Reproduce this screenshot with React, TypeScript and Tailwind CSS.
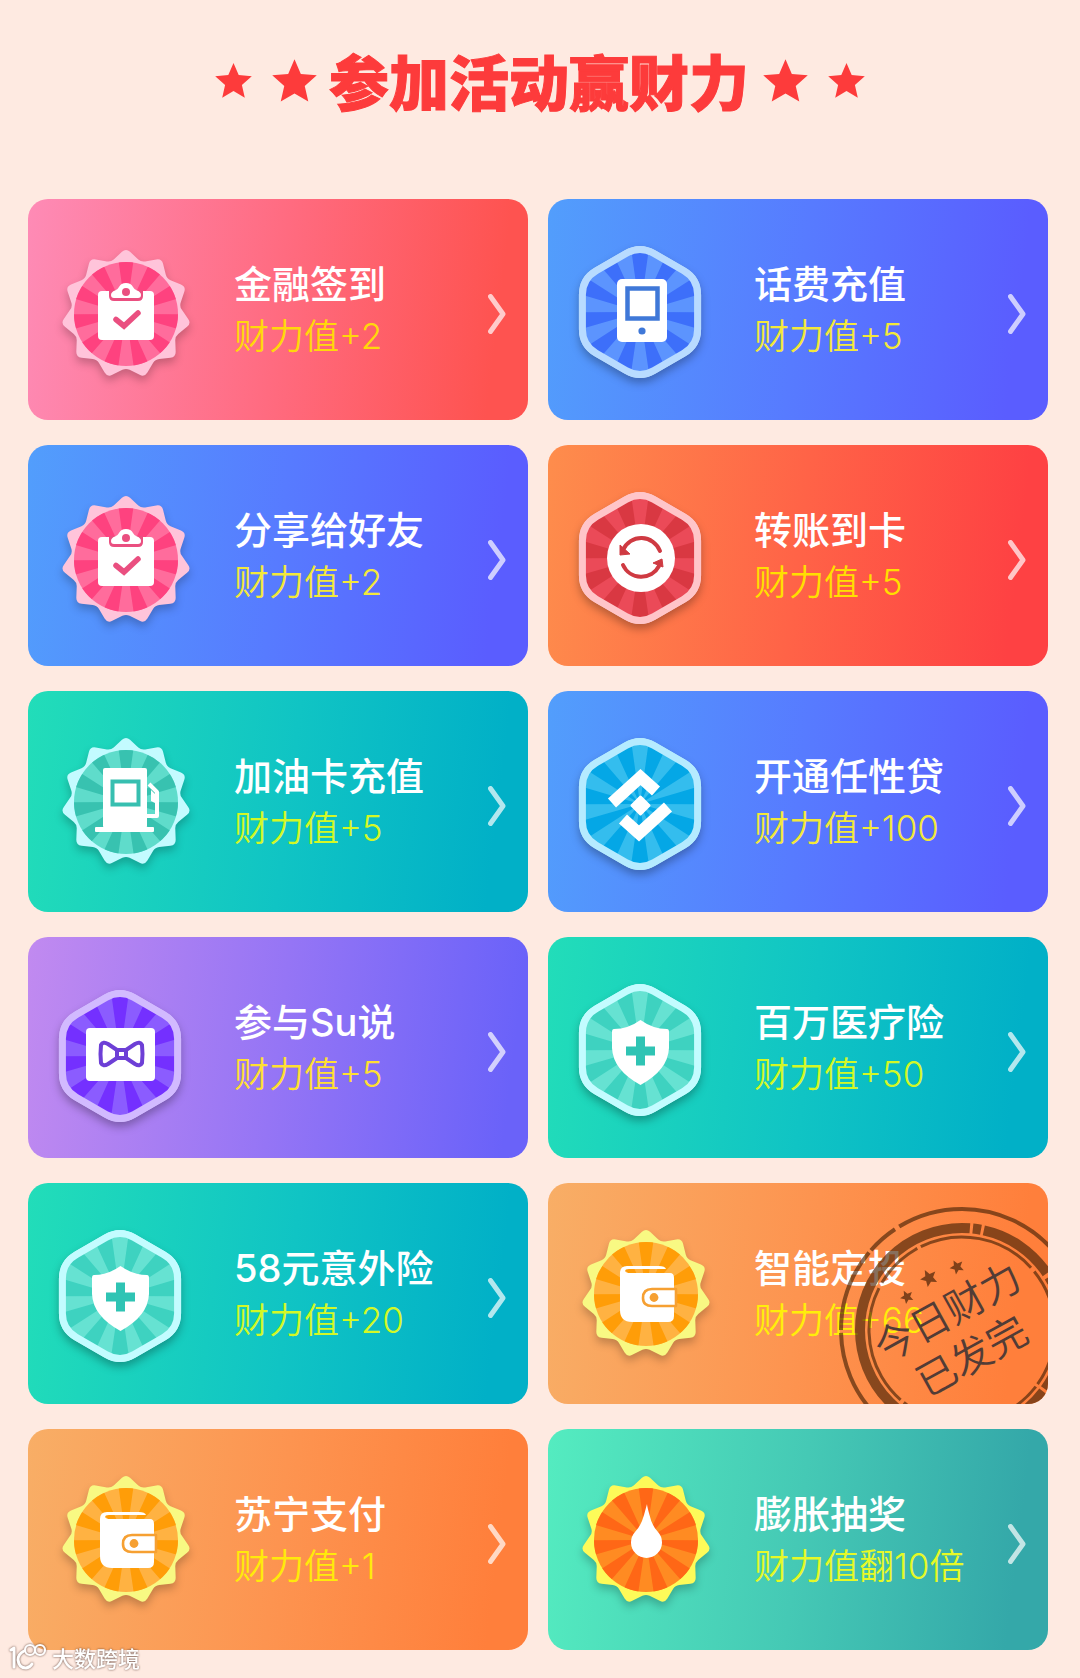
import React from "react";

type Point = [number, number];

const polar = (radius: number, degrees: number): Point => {
  const a = (degrees * Math.PI) / 180;
  return [radius * Math.sin(a), -radius * Math.cos(a)];
};

const toward = (from: Point, to: Point, distance: number): Point => {
  const dx = to[0] - from[0];
  const dy = to[1] - from[1];
  const length = Math.hypot(dx, dy);
  return [from[0] + (dx / length) * distance, from[1] + (dy / length) * distance];
};

const fmt = (p: Point) => `${p[0].toFixed(2)} ${p[1].toFixed(2)}`;

function roundedPolygon(points: Point[], radius: (i: number) => number): string {
  const parts = points.map((p, i) => {
    const prev = points[(i + points.length - 1) % points.length];
    const next = points[(i + 1) % points.length];
    const a = toward(p, prev, radius(i));
    const b = toward(p, next, radius(i));
    return `${i === 0 ? "M" : "L"}${fmt(a)} Q${fmt(p)} ${fmt(b)}`;
  });
  return parts.join(" ") + " Z";
}

const HEXAGON = roundedPolygon(
  Array.from({ length: 6 }, (_, i) => polar(66.5, i * 60)),
  () => 16,
);

const SCALLOP = roundedPolygon(
  Array.from({ length: 22 }, (_, i) => polar(i % 2 === 0 ? 66 : 54, (i * 360) / 22)),
  (i) => (i % 2 === 0 ? 5.5 : 4),
);

const RAYS = Array.from({ length: 11 }, (_, i) => {
  const mid = (i * 360) / 11;
  return `M0 0 L${fmt(polar(80, mid - 8))} L${fmt(polar(80, mid + 8))} Z`;
}).join(" ");

const STAR =
  Array.from({ length: 10 }, (_, i) => `${i === 0 ? "M" : "L"}${fmt(polar(i % 2 === 0 ? 10 : 4.6, i * 36))}`).join(
    " ",
  ) + " Z";

type Glyph = "clipboard" | "phone" | "transfer" | "fuel" | "loan" | "bow" | "shield" | "wallet" | "drop";

function BadgeGlyph({ glyph, ink }: { glyph: Glyph; ink: string }) {
  switch (glyph) {
    case "clipboard":
      return (
        <g>
          <rect x="-28" y="-23" width="56" height="49" rx="4" fill="#fff" />
          <path
            d="M-17 -24 V-18 Q-17 -13 -12 -13 H12 Q17 -13 17 -18 V-24 Z"
            fill={ink}
          />
          <path
            d="M-12 -16 Q-15 -16 -15 -19 Q-15 -22 -11 -23.500 Q-8 -25 -7 -27 Q-5 -31 0 -31 Q5 -31 7 -27 Q8 -25 11 -23.500 Q15 -22 15 -19 Q15 -16 12 -16 Z"
            fill="#fff"
          />
          <circle cx="0" cy="-22" r="4" fill={ink} />
          <path d="M-10 5.500 L-2 12 L12 -1" fill="none" stroke={ink} strokeWidth="5.500" strokeLinecap="round" />
        </g>
      );
    case "phone":
      return (
        <g>
          <rect x="-23" y="-33" width="50" height="63" rx="5" fill="#fff" />
          <rect x="-12.500" y="-23.500" width="30" height="30" fill="none" stroke={ink} strokeWidth="4.500" />
          <circle cx="2" cy="19" r="3.600" fill={ink} />
        </g>
      );
    case "transfer":
      return (
        <g>
          <circle cx="1" cy="0" r="34" fill="#fff" />
          <path d="M-17 -8 A20 20 0 0 1 20 -7" fill="none" stroke={ink} strokeWidth="4" strokeLinecap="round" />
          <path d="M-17 7 A20 20 0 0 0 19 8" fill="none" stroke={ink} strokeWidth="4" strokeLinecap="round" />
          <path d="M-20 -13 L-20 -3 L-10 -4 Z" fill={ink} stroke={ink} strokeLinejoin="round" />
          <path d="M13 5 L22 1 L23 9 Z" fill={ink} stroke={ink} strokeLinejoin="round" />
        </g>
      );
    case "fuel":
      return (
        <g>
          <rect x="-23" y="-34" width="44" height="60" rx="2" fill="#fff" />
          <rect x="-31" y="25" width="59" height="5" rx="1" fill="#fff" />
          <rect x="-13.500" y="-20.500" width="26" height="23" fill="none" stroke={ink} strokeWidth="4" />
          <path d="M23 -18 L31 -10 V14 H20" fill="none" stroke="#fff" strokeWidth="4" strokeLinejoin="round" />
          <path d="M25 -12 L29 -8 V1 L25 -1 Z" fill="#fff" />
        </g>
      );
    case "loan":
      return (
        <g fill="none" stroke="#fff" strokeWidth="12">
          <path d="M-28 -1 L0.500 -27 L16 -13" />
          <path d="M-17 15 L-1 29.500 L28 3" />
          <path d="M0.500 -7 L9 1.500 L0.500 10 L-8 1.500 Z" fill="#fff" strokeWidth="3" strokeLinejoin="round" />
        </g>
      );
    case "bow":
      return (
        <g>
          <rect x="-34" y="-28" width="69" height="53" rx="4" fill="#fff" />
          <g fill="none" stroke={ink} strokeWidth="4" strokeLinejoin="round">
            <path d="M-3 -6 L-12 -12 Q-17 -15 -19 -11 Q-20 -2 -19 7 Q-17 11 -12 8 L-3 2" />
            <path d="M6 -6 L15 -12 Q20 -15 22 -11 Q23 -2 22 7 Q20 11 15 8 L6 2" />
            <rect x="-3" y="-6" width="9" height="8" rx="1" />
          </g>
        </g>
      );
    case "shield":
      return (
        <g>
          <path
            d="M0.500 -30 Q13 -21 27 -21 Q29 -21 29 -18 V-2 Q28 20 0.500 35 Q-27 20 -28 -2 V-18 Q-28 -21 -26 -21 Q-12 -21 0.500 -30 Z"
            fill="#fff"
          />
          <path d="M-14 1 H15 M0.500 -13.500 V15.500" stroke={ink} strokeWidth="9" />
        </g>
      );
    case "wallet":
      return (
        <g>
          <path
            d="M-26 -21 Q-26 -28 -19 -28 H13 Q19 -28 20 -25 H-17 Q-21 -25 -21 -23 Q-20 -21 -16 -21 H24 Q28 -21 28 -16 V22 Q28 28 22 28 H-14 Q-26 28 -26 16 Z"
            fill="#fff"
          />
          <path
            d="M30 -5 H6 Q-3 -5 -3 4 Q-3 12 6 12 H30 Z"
            fill="#fff"
            stroke={ink}
            strokeWidth="2.600"
            strokeLinejoin="round"
          />
          <circle cx="8" cy="3.500" r="4.400" fill={ink} />
        </g>
      );
    case "drop":
      return (
        <path d="M1 -36 Q1 -34 3.500 -25 Q6 -14 12 -8 A15.500 15.500 0 1 1 -11 -8 Q-5 -14 -2 -25 Z" fill="#fff" />
      );
  }
}

interface Tone {
  rim: string;
  light: string;
  dark: string;
  ink: string;
}

const ROSE: Tone = { rim: "#ffc4da", light: "#ff6c9c", dark: "#fe427f", ink: "#ea4f80" };
const AZURE: Tone = { rim: "#b8dbff", light: "#5c94fe", dark: "#3d6ffa", ink: "#3f78d8" };
const CRIMSON: Tone = { rim: "#ffc5c9", light: "#eb4a58", dark: "#d93842", ink: "#cf3a42" };
const MINT: Tone = { rim: "#c3fbff", light: "#5fdccb", dark: "#38c2b0", ink: "#37bfb0" };
const AQUA: Tone = { rim: "#c3fcff", light: "#66e2d2", dark: "#3ed2c0", ink: "#2fc4b4" };
const SKY: Tone = { rim: "#b5ebff", light: "#34bdee", dark: "#04a7e6", ink: "#04a7e6" };
const VIOLET: Tone = { rim: "#d2baff", light: "#8b5cff", dark: "#7430ff", ink: "#6d3fd6" };
const AMBER: Tone = { rim: "#f8f983", light: "#ffb242", dark: "#ff9d08", ink: "#f6a032" };
const FLAME: Tone = { rim: "#fdfb59", light: "#ff8b22", dark: "#ff6716", ink: "#ff6716" };

interface BadgeProps {
  shape: "scallop" | "hexagon";
  tone: Tone;
  glyph: Glyph;
  litTop?: boolean;
  id: string;
}

function Badge({ shape, tone, glyph, litTop, id }: BadgeProps) {
  const base = litTop ? tone.dark : tone.light;
  const rays = litTop ? tone.light : tone.dark;
  return (
    <svg viewBox="-80 -80 160 160" className="h-40 w-40" aria-hidden="true">
      <defs>
        <clipPath id={id}>{shape === "hexagon" ? <path d={HEXAGON} /> : <circle r="52" />}</clipPath>
      </defs>
      {shape === "hexagon" ? (
        <path d={HEXAGON} fill={tone.rim} stroke={tone.rim} strokeWidth="7" className="drop-shadow-[0_5px_4px_rgba(0,0,0,0.28)]" />
      ) : (
        <path d={SCALLOP} fill={tone.rim} className="drop-shadow-[0_5px_4px_rgba(0,0,0,0.22)]" />
      )}
      <g clipPath={`url(#${id})`}>
        <rect x="-80" y="-80" width="160" height="160" fill={base} />
        <path d={RAYS} fill={rays} />
      </g>
      {shape === "hexagon" && <path d={HEXAGON} fill="none" stroke={tone.rim} strokeWidth="7" />}
      <BadgeGlyph glyph={glyph} ink={tone.ink} />
    </svg>
  );
}

interface Activity {
  title: string;
  reward: string;
  surface: string;
  rewardColor: string;
  shape: "scallop" | "hexagon";
  tone: Tone;
  glyph: Glyph;
  litTop?: boolean;
  badgeInset: string;
  soldOut?: boolean;
}

const PINK = "bg-[linear-gradient(97deg,#fe8bb6,#ff6b80_50%,#fe5350_92%)]";
const BLUE = "bg-[linear-gradient(97deg,#529efc,#577bff_50%,#5a5dff_92%)]";
const RED = "bg-[linear-gradient(97deg,#fe8d4c,#ff6347_50%,#fe4143_92%)]";
const TEAL = "bg-[linear-gradient(97deg,#22ddb9,#10c4c4_52%,#01b0c7_92%)]";
const PURPLE = "bg-[linear-gradient(97deg,#c18af0,#9575f5_50%,#6a62f9_95%)]";
const ORANGE = "bg-[linear-gradient(97deg,#f8ae66,#fd9450_50%,#ff7f3b_92%)]";
const GREEN = "bg-[linear-gradient(97deg,#54ecc0,#45c9b5_50%,#34a8a9_92%)]";

const ACTIVITIES: Activity[] = [
  { title: "金融签到", reward: "财力值+2", surface: PINK, rewardColor: "text-[#ffd80a]", shape: "scallop", tone: ROSE, glyph: "clipboard", badgeInset: "pt-2" },
  { title: "话费充值", reward: "财力值+5", surface: BLUE, rewardColor: "text-[#f3e83a]", shape: "hexagon", tone: AZURE, glyph: "phone", badgeInset: "pt-1" },
  { title: "分享给好友", reward: "财力值+2", surface: BLUE, rewardColor: "text-[#f3e83a]", shape: "scallop", tone: ROSE, glyph: "clipboard", badgeInset: "pt-2" },
  { title: "转账到卡", reward: "财力值+5", surface: RED, rewardColor: "text-[#ffdf00]", shape: "hexagon", tone: CRIMSON, glyph: "transfer", litTop: true, badgeInset: "pt-1" },
  { title: "加油卡充值", reward: "财力值+5", surface: TEAL, rewardColor: "text-[#d3f826]", shape: "scallop", tone: MINT, glyph: "fuel", badgeInset: "pt-0" },
  { title: "开通任性贷", reward: "财力值+100", surface: BLUE, rewardColor: "text-[#f3e83a]", shape: "hexagon", tone: SKY, glyph: "loan", litTop: true, badgeInset: "pt-1" },
  { title: "参与Su说", reward: "财力值+5", surface: PURPLE, rewardColor: "text-[#ffdf32]", shape: "hexagon", tone: VIOLET, glyph: "bow", badgeInset: "pt-4" },
  { title: "百万医疗险", reward: "财力值+50", surface: TEAL, rewardColor: "text-[#d3f826]", shape: "hexagon", tone: AQUA, glyph: "shield", litTop: true, badgeInset: "pt-1" },
  { title: "58元意外险", reward: "财力值+20", surface: TEAL, rewardColor: "text-[#d3f826]", shape: "hexagon", tone: AQUA, glyph: "shield", litTop: true, badgeInset: "pt-1" },
  { title: "智能定投", reward: "财力值+66", surface: ORANGE, rewardColor: "text-[#ffee0a]", shape: "scallop", tone: AMBER, glyph: "wallet", badgeInset: "pt-0", soldOut: true },
  { title: "苏宁支付", reward: "财力值+1", surface: ORANGE, rewardColor: "text-[#ffea0a]", shape: "scallop", tone: AMBER, glyph: "wallet", badgeInset: "pt-0" },
  { title: "膨胀抽奖", reward: "财力值翻10倍", surface: GREEN, rewardColor: "text-[#e6f926]", shape: "scallop", tone: FLAME, glyph: "drop", badgeInset: "pt-0" },
];

function SoldOutStamp() {
  return (
    <div className="absolute top-[23px] -right-[38px] flex h-[248px] w-[248px] items-center justify-center">
      <svg viewBox="-124 -124 248 248" className="absolute inset-0 h-full w-full" aria-hidden="true">
        <g fill="none" stroke="#4a2408" strokeOpacity="0.66">
          <circle r="121" strokeWidth="4" strokeDasharray="84 3 32 5 170 3 150 4 60 3 22 3 218 3" transform="rotate(180)" />
          <circle r="102" strokeWidth="10" strokeDasharray="168 3 8 3 78 4 6 3 110 3 44 5 8 3 199 4" transform="rotate(180)" />
          <circle r="93" strokeWidth="3" strokeDasharray="92 6 50 4 120 5 34 7 80 3" transform="rotate(150)" />
        </g>
        <g fill="#4a2408" fillOpacity="0.7">
          <path d={STAR} transform="translate(-55 -33) rotate(-28) scale(0.7)" />
          <path d={STAR} transform="translate(-33 -52) rotate(-28) scale(0.9)" />
          <path d={STAR} transform="translate(-5 -63) rotate(-28) scale(0.75)" />
        </g>
      </svg>
      <p className="relative -rotate-[29deg] pr-2 text-center text-[40px] leading-[50px] [font-weight:350] text-[#523c36]">
        今日财力
        <br />
        已发完
      </p>
    </div>
  );
}

function ActivityCard({ item, id }: { item: Activity; id: string }) {
  return (
    <a
      href="#"
      className={`relative flex min-h-[221px] items-center overflow-hidden rounded-[20px] pr-[22px] ${item.surface}`}
    >
      <span
        className={`flex w-[206px] shrink-0 ${item.shape === "hexagon" ? "pl-3" : "pl-[18px]"} ${item.badgeInset}`}
      >
        <Badge id={id} shape={item.shape} tone={item.tone} glyph={item.glyph} litTop={item.litTop} />
      </span>
      <span className="flex flex-1 flex-col font-[Inter,'Noto_Sans_CJK_SC',sans-serif] whitespace-nowrap">
        <span className="text-[38px] leading-[52px] font-medium text-white">{item.title}</span>
        <span className={`text-[35px] leading-[52px] [font-weight:350] ${item.rewardColor}`}>{item.reward}</span>
      </span>
      {item.soldOut ? (
        <SoldOutStamp />
      ) : (
        <svg viewBox="0 0 18 40" className="mt-2 h-10 w-[18px] shrink-0" aria-hidden="true">
          <path
            d="M2.500 2.500 L15 20 L2.500 37.500"
            fill="none"
            stroke="#fff"
            strokeOpacity="0.7"
            strokeWidth="5"
            strokeLinecap="round"
            strokeLinejoin="round"
          />
        </svg>
      )}
    </a>
  );
}

function Star({ className }: { className: string }) {
  return (
    <svg viewBox="-9.6 -10 19.2 18.200" className={`shrink-0 ${className}`} aria-hidden="true">
      <path d={STAR} fill="#fd3b3b" />
    </svg>
  );
}

function Watermark() {
  return (
    <div className="absolute bottom-1.5 left-2 flex items-center gap-1 drop-shadow-[0_0_1px_rgba(90,60,50,0.9)]">
      <svg viewBox="0 0 40 30" className="h-[30px] w-10" aria-hidden="true">
        <g fill="none" stroke="#fff" strokeWidth="3" strokeLinecap="round" strokeLinejoin="round">
          <path d="M3 8 L6 6 V25" />
          <path d="M16 9 Q10 12 10 18 Q11 26 18 26 Q22 25.500 24 22" />
          <circle cx="22" cy="8" r="5" strokeWidth="2.200" />
          <circle cx="32" cy="8" r="5" strokeWidth="2.200" />
        </g>
      </svg>
      <span className="text-[22px] leading-[30px] font-medium text-white">大数跨境</span>
    </div>
  );
}

export default function App() {
  return (
    <main className="relative min-h-screen bg-[#feeae1] pt-10 pr-8 pb-7 pl-7 font-['Noto_Sans_CJK_SC',sans-serif]">
      <header className="mb-[79px] flex h-20 items-center justify-center pl-1">
        <Star className="mr-5 h-[35px] w-[37px]" />
        <Star className="mr-3 h-[43px] w-[45px]" />
        <h1 className="text-[60px] leading-[80px] font-black whitespace-nowrap text-[#fd3b3b] [-webkit-text-stroke:1px_#fd3b3b]">
          参加活动赢财力
        </h1>
        <Star className="ml-3.5 h-[43px] w-[45px]" />
        <Star className="ml-5 h-[35px] w-[37px]" />
      </header>
      <section className="grid grid-cols-2 gap-x-5 gap-y-[25px]">
        {ACTIVITIES.map((item, i) => (
          <ActivityCard key={item.title} item={item} id={`badge-${i}`} />
        ))}
      </section>
      <Watermark />
    </main>
  );
}
